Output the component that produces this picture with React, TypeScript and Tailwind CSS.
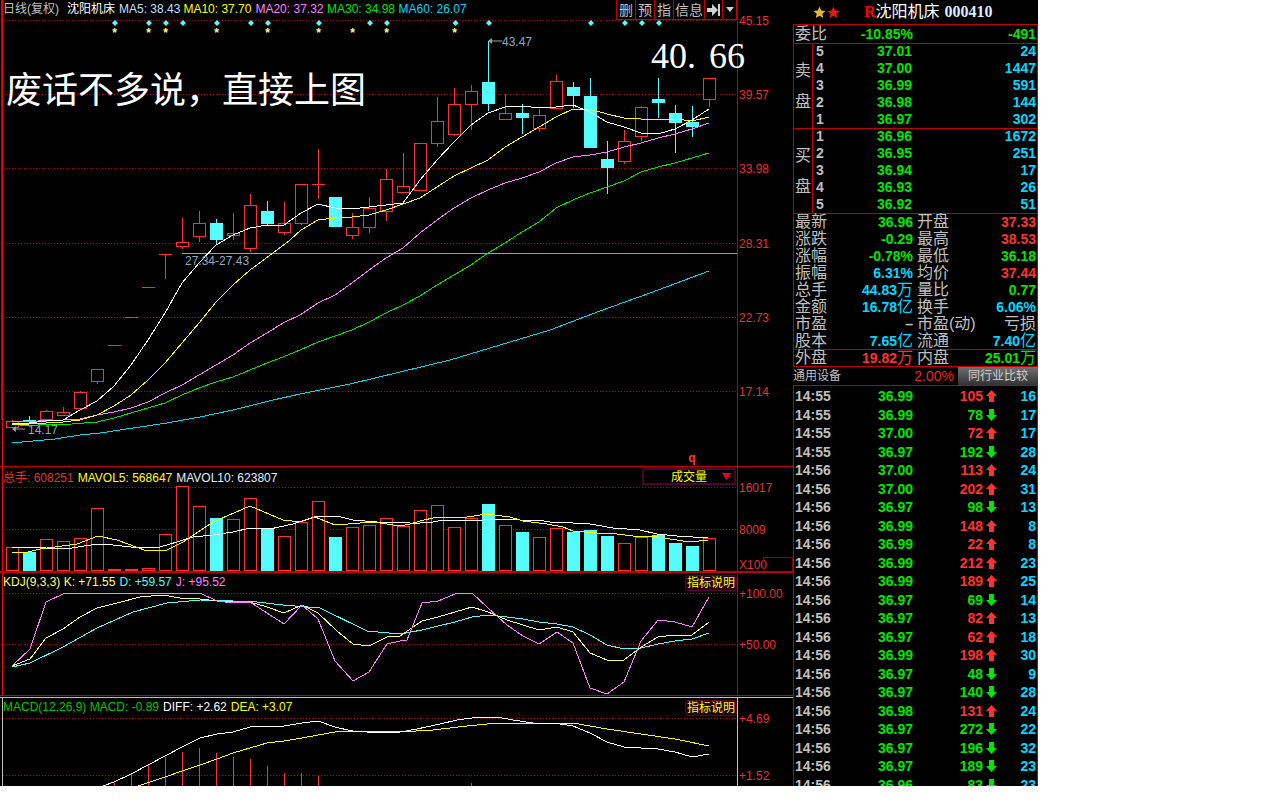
import React from "react";

const RED = "#ff3232";
const CYAN = "#54fcfc";
const FRAME = "#c00000";
const GRID = "#b80000";
const AXIS = "#e63232";
const GREEN = "#00e600";
const NUMCYAN = "#00d8ff";

type C = [number, number, number, number, number]; // wickTop, bodyTop, bodyBottom, wickBottom, isCyan
const candles: C[] = [
  [420, 421, 427, 428, 0], [416, 420, 422, 424, 1], [410, 411, 419, 422, 0], [407, 412, 415, 416, 0],
  [391, 392, 408, 410, 0], [369, 369, 381, 384, 0], [345, 345, 345, 345, 0], [317, 317, 317, 317, 0],
  [287, 287, 287, 287, 0], [254, 254, 254, 279, 0], [218, 242, 246, 249, 0], [211, 223, 236, 242, 0],
  [219, 223, 240, 245, 1], [213, 233, 235, 240, 0], [194, 205, 248, 252, 0], [201, 211, 224, 226, 1],
  [202, 223, 232, 235, 0], [184, 184, 223, 225, 0], [149, 184, 184, 199, 0], [197, 197, 227, 227, 1],
  [213, 227, 235, 239, 0], [197, 208, 227, 233, 0], [169, 179, 211, 221, 0], [153, 186, 192, 193, 0],
  [143, 143, 190, 190, 0], [97, 121, 143, 147, 0], [88, 104, 134, 136, 0], [85, 91, 104, 130, 0],
  [41, 82, 104, 111, 1], [94, 113, 119, 119, 0], [104, 113, 118, 134, 1], [109, 115, 128, 132, 0],
  [75, 81, 108, 109, 0], [82, 87, 96, 108, 1], [78, 96, 148, 148, 1], [141, 159, 168, 194, 1],
  [130, 141, 161, 164, 0], [106, 107, 136, 141, 0], [78, 99, 103, 118, 1], [105, 113, 123, 153, 1],
  [106, 122, 127, 137, 1], [78, 78, 99, 107, 0],
];

const vols: [number, number][] = [
  [547, 0], [552, 1], [539, 0], [541, 0], [538, 0], [508, 0], [569, 0], [569, 0], [568, 0], [534, 0], [486, 0],
  [506, 0], [518, 1], [519, 0], [498, 0], [529, 1], [536, 0], [522, 0], [501, 0], [537, 1], [527, 0], [525, 0],
  [518, 0], [526, 0], [510, 0], [505, 0], [527, 0], [518, 0], [504, 1], [525, 0], [532, 1], [537, 0], [528, 0],
  [532, 1], [530, 1], [536, 1], [543, 0], [537, 0], [535, 1], [543, 1], [546, 1], [538, 0],
];

const ma5 = "12,423 29,423 46,421 63,420 80,410 97,401 114,386 131,365 148,340 165,313 182,283 199,263 216,245 233,235 250,228 267,225 284,225 301,213 318,204 335,208 352,209 369,207 386,205 403,203 420,180 437,160 454,142 471,125 488,113 505,107 522,106 539,108 556,107 573,105 590,112 607,122 624,127 641,133 658,134 675,129 692,120 709,109";
const ma10 = "12,424 29,424 63,422 80,420 97,415 114,406 131,395 148,380 165,363 182,343 199,323 216,302 233,285 250,270 273,253 290,240 301,230 318,220 335,218 352,217 369,215 386,210 403,204 420,198 437,187 454,176 471,168 488,160 505,147 522,137 539,127 556,117 573,109 590,109 607,114 624,118 641,119 658,119 675,119 692,121 709,117";
const ma20 = "12,422 38,421 63,420 80,419 97,415 114,412 131,408 148,402 165,393 182,385 199,375 216,365 233,355 250,343 267,333 283,323 300,315 318,303 335,295 352,283 369,270 386,258 403,248 420,233 437,220 454,208 471,198 488,190 505,183 522,178 539,172 556,163 573,157 590,155 607,152 624,147 641,143 658,138 675,134 692,129 709,123";
const ma30 = "20,425 38,425 72,424 97,422 114,418 131,413 148,408 165,403 182,395 199,388 216,382 233,377 250,370 267,363 283,357 300,350 318,342 335,336 352,330 369,322 386,313 403,305 420,296 437,285 454,275 471,265 488,253 505,243 522,232 539,222 556,208 573,200 590,193 607,187 624,181 641,172 658,167 675,163 692,158 709,153";
const ma60 = "12,443 33,441 55,439 80,435 100,433 133,428 167,423 200,417 233,410 273,400 300,394 350,384 400,372 450,360 500,345 550,330 600,311 650,293 709,271";

const volWhite = "12,547 37,547 55,549 72,548 97,544 113,545 140,548 160,547 177,542 193,537 213,535 233,532 250,528 270,529 293,524 317,516 337,516 353,520 377,522 400,522 410,523 420,523 433,522 443,520 467,520 483,520 500,519 520,520 537,520 550,522 573,523 590,524 613,528 640,530 657,534 677,536 693,537 708,538";
const volYellow = "12,553 28,552 40,549 77,544 98,536 117,540 147,551 167,550 183,542 213,522 250,506 283,520 300,522 315,517 335,525 373,522 400,526 410,524 420,521 437,517 467,517 487,514 510,517 523,521 547,524 563,527 573,531 597,533 617,534 633,536 657,537 670,539 690,542 708,540";

const kdjJ = "12,666 30,649 46,602 63,594 72,593 200,593 217,601 233,603 250,602 267,613 284,624 302,605 318,619 335,661 353,681 369,672 387,644 400,641 407,640 422,603 438,601 455,594 472,593 488,608 507,625 523,636 539,644 557,632 573,643 590,688 607,694 624,682 641,641 658,620 675,622 692,627 709,597";
const kdjK = "12,666 30,659 46,638 63,629 80,617 97,608 117,603 140,597 163,595 180,598 200,599 217,601 233,602 250,602 267,607 284,613 302,605 318,613 337,631 353,644 369,646 387,637 400,636 422,621 438,617 455,612 472,607 488,612 507,620 523,625 539,630 557,627 573,632 590,653 607,660 624,660 641,647 658,637 675,635 692,635 709,622";
const kdjD = "12,667 30,663 63,647 97,628 133,612 167,603 200,600 233,601 257,602 283,605 320,608 367,631 400,634 422,630 438,626 455,622 472,617 488,615 507,617 523,619 539,622 557,624 573,627 590,635 607,645 624,649 641,648 658,644 675,641 692,639 709,633";

const diff = "103,786 114,782 131,774 148,765 165,756 182,747 200,738 217,734 233,732 250,727 267,726 284,726 302,723 318,721 335,727 352,731 367,732 400,732 417,729 440,724 457,720 472,718 497,717 513,720 533,723 560,724 573,726 590,733 607,742 624,747 641,748 658,749 675,752 692,757 709,754";
const dea = "138,786 165,777 182,771 200,765 217,759 233,753 250,748 267,743 284,741 302,738 318,735 335,732 352,731 400,732 433,730 467,726 497,723 533,723 573,723 607,729 641,734 675,739 709,746";
const macdBars: [number, number][] = [[114, 783], [131, 774], [148, 765], [165, 757], [182, 752], [199, 748], [216, 753], [233, 757], [250, 759], [267, 766], [284, 773], [301, 773], [318, 776], [471, 783]];

const diamonds = [115, 149, 166, 183, 217, 251, 268, 319, 370, 387, 455.5, 489, 591, 625, 642, 659];
const stars = [114.5, 148.5, 165.5, 216.5, 267.5, 318.5, 352.5, 386.5, 454.5];

function Line({ pts, color }: { pts: string; color: string }) {
  return <polyline points={pts} fill="none" stroke={color} strokeWidth={1} shapeRendering="crispEdges" />;
}

function Grid({ y, x2 = 737 }: { y: number; x2?: number }) {
  return <line x1={3} x2={x2} y1={y} y2={y} stroke={GRID} strokeWidth={1} strokeDasharray="1 2" shapeRendering="crispEdges" />;
}

function AxisLabel({ y, children }: { y: number; children: React.ReactNode }) {
  return (
    <text x={739} y={y} fill={AXIS} fontSize={12} dominantBaseline="central">
      {children}
    </text>
  );
}

function Rails({ top, bottom, color = FRAME }: { top: number; bottom: number; color?: string }) {
  return (
    <g shapeRendering="crispEdges">
      <line x1={2.5} x2={2.5} y1={top} y2={bottom} stroke={color === FRAME ? "#ff0000" : color} />
      <line x1={737.5} x2={737.5} y1={top} y2={bottom} stroke={color} />
    </g>
  );
}

function MainChart() {
  return (
    <svg className="block h-full w-full" viewBox="0 0 793 466">
      <rect x={1} y={0} width={1} height={420} fill="#c80000" shapeRendering="crispEdges" />
      <Rails top={0} bottom={466} />
      {[20.5, 94.5, 168.5, 243.5, 317.5, 391.5].map((y) => <Grid key={y} y={y} />)}
      <line x1={182} x2={737} y1={253.5} y2={253.5} stroke="#a0a0a0" />
      {diamonds.map((x) => (
        <polygon key={x} points={`${x},20 ${x + 3},23 ${x},26 ${x - 3},23`} fill={CYAN} />
      ))}
      {stars.map((x) => (
        <text key={x} x={x} y={37} fill="#ffff80" fontSize={12} fontWeight={700} textAnchor="middle">*</text>
      ))}
      {candles.map((c, i) => {
        const cx = 12.5 + 17 * i;
        const [wt, bt, bb, wb, cyan] = c;
        const color = cyan ? CYAN : RED;
        return (
          <g key={i} shapeRendering="crispEdges">
            <line x1={cx} x2={cx} y1={wt} y2={wb} stroke={color} />
            {cyan ? (
              <rect x={cx - 6.5} y={bt} width={13} height={bb - bt} fill={CYAN} />
            ) : bb === bt ? (
              <line x1={cx - 6.5} x2={cx + 6.5} y1={bt + 0.5} y2={bt + 0.5} stroke={RED} />
            ) : (
              <rect x={cx - 6} y={bt + 0.5} width={12} height={bb - bt} fill="#000" stroke={RED} />
            )}
          </g>
        );
      })}
      <Line pts={ma60} color="#00d8f0" />
      <Line pts={ma30} color="#00e600" />
      <Line pts={ma20} color="#ff80ff" />
      <Line pts={ma10} color="#ffff00" />
      <Line pts={ma5} color="#ffffff" />
      <polyline points="490,41 502,41" stroke="#a0a0a0" fill="none" />
      <polygon points="488,41 492,38 492,44" fill="#a0a0a0" />
      <text x={502} y={46} fill="#8fa8c0" fontSize={12}>43.47</text>
      <polyline points="14,429 25,429" stroke="#a0a0a0" fill="none" />
      <polygon points="12,429 16,426 16,432" fill="#a0a0a0" />
      <text x={28} y={434} fill="#8fa8c0" fontSize={12}>14.17</text>
      <text x={185} y={265} fill="#8fa8c0" fontSize={12}>27.34-27.43</text>
      <text x={692} y={462} fill={RED} fontSize={12} fontWeight={700} textAnchor="middle">q</text>
      <AxisLabel y={21}>45.15</AxisLabel>
      <AxisLabel y={94.5}>39.57</AxisLabel>
      <AxisLabel y={168.5}>33.98</AxisLabel>
      <AxisLabel y={243.5}>28.31</AxisLabel>
      <AxisLabel y={317.5}>22.73</AxisLabel>
      <AxisLabel y={391.5}>17.14</AxisLabel>
    </svg>
  );
}

function VolumeChart() {
  return (
    <svg className="block h-full w-full" viewBox="0 467 793 104">
      <Rails top={467} bottom={571} />
      <Grid y={487.5} />
      <Grid y={529.5} />
      {vols.map(([top, cyan], i) => {
        const cx = 12.5 + 17 * i;
        return cyan ? (
          <rect key={i} x={cx - 6.5} y={top} width={13} height={571 - top} fill={CYAN} shapeRendering="crispEdges" />
        ) : (
          <rect key={i} x={cx - 6} y={top + 0.5} width={12} height={570 - top} fill="#000" stroke={RED} shapeRendering="crispEdges" />
        );
      })}
      <Line pts={volWhite} color="#ffffff" />
      <Line pts={volYellow} color="#ffff00" />
      <AxisLabel y={488}>16017</AxisLabel>
      <AxisLabel y={530}>8009</AxisLabel>
      <AxisLabel y={565}>X100</AxisLabel>
      <rect x={763.5} y={557.5} width={29} height={14} fill="none" stroke="#900000" shapeRendering="crispEdges" />
    </svg>
  );
}

function KdjChart() {
  return (
    <svg className="block h-full w-full" viewBox="0 573 793 122">
      <Rails top={573} bottom={695} />
      <Grid y={593.5} />
      <Grid y={644.5} />
      <Line pts={kdjD} color={CYAN} />
      <Line pts={kdjK} color="#ffff80" />
      <Line pts={kdjJ} color="#ff80ff" />
      <AxisLabel y={594}>+100.00</AxisLabel>
      <AxisLabel y={645}>+50.00</AxisLabel>
    </svg>
  );
}

function MacdChart() {
  return (
    <svg className="block h-full w-full" viewBox="0 698 793 88">
      <Rails top={698} bottom={786} color="#c0c0c0" />
      <Grid y={718.5} />
      <Grid y={775.5} />
      {macdBars.map(([x, top]) => (
        <line key={x} x1={x + 0.5} x2={x + 0.5} y1={top} y2={786} stroke={RED} shapeRendering="crispEdges" />
      ))}
      <Line pts={dea} color="#ffff00" />
      <Line pts={diff} color="#ffffff" />
      <AxisLabel y={719}>+4.69</AxisLabel>
      <AxisLabel y={776}>+1.52</AxisLabel>
    </svg>
  );
}

function IndicatorTag() {
  return (
    <div className="absolute left-[685px] top-[2px] flex h-[16px] w-[52px] items-center justify-center rounded-[3px] border border-[#5a0030] bg-[#200010] text-[12px] leading-none text-[#ffff00]">
      指标说明
    </div>
  );
}

const toolbar: [string, number][] = [["删", 19], ["预", 19], ["指", 19], ["信息", 31]];

function Toolbar() {
  return (
    <div className="absolute left-[616px] top-0 flex h-[20px] border-b border-[#c00000] text-[14px] leading-none text-[#c0c0c0]">
      {toolbar.map(([t, w]) => (
        <div key={t} style={{ width: w }} className="flex items-center justify-center border-l border-[#c00000]">{t}</div>
      ))}
      <div className="flex w-[18px] items-center justify-center border-l border-[#c00000] bg-[#000]">
        <svg width="14" height="12" viewBox="0 0 14 12">
          <path d="M0 4h5V0l6 6-6 6V8H0z" fill="#d0d0d0" />
          <rect x="11" y="0" width="2" height="12" fill="#d0d0d0" />
        </svg>
      </div>
      <div className="flex w-[15px] items-center justify-center border-x border-[#c00000]">
        <svg width="8" height="5" viewBox="0 0 8 5"><path d="M0 0h8L4 5z" fill="#d0d0d0" /></svg>
      </div>
    </div>
  );
}

function Chinese({ children, className = "" }: { children: React.ReactNode; className?: string }) {
  return <span className={`text-[16px] font-normal leading-none text-[#c0c0c0] ${className}`}>{children}</span>;
}

function Num({ color, children }: { color: string; children: React.ReactNode }) {
  return <span style={{ color }} className="text-[14px] font-bold leading-none">{children}</span>;
}

const sell: [string, string, string][] = [["5", "37.01", "24"], ["4", "37.00", "1447"], ["3", "36.99", "591"], ["2", "36.98", "144"], ["1", "36.97", "302"]];
const buy: [string, string, string][] = [["1", "36.96", "1672"], ["2", "36.95", "251"], ["3", "36.94", "17"], ["4", "36.93", "26"], ["5", "36.92", "51"]];

function Book({ label, rows }: { label: string; rows: [string, string, string][] }) {
  return (
    <div className="flex h-[85px] border-t border-[#c00000]">
      <div className="flex w-[19px] flex-col items-center justify-center gap-[15px] border-r border-[#c00000]">
        <Chinese>{label}</Chinese>
        <Chinese>盘</Chinese>
      </div>
      <div className="-mt-[2px] flex flex-1 flex-col">
        {rows.map(([n, p, v]) => (
          <div key={n} className="flex h-[17px] shrink-0 items-center">
            <span className="w-[20px] pl-[3px]"><Num color="#c0c0c0">{n}</Num></span>
            <span className="w-[79px] text-right"><Num color={GREEN}>{p}</Num></span>
            <span className="flex-1 pr-[1px] text-right"><Num color={NUMCYAN}>{v}</Num></span>
          </div>
        ))}
      </div>
    </div>
  );
}

type Stat = [string, string, string, string, string, string, string?, string?];
const stats: Stat[] = [
  ["最新", "36.96", GREEN, "开盘", "37.33", RED],
  ["涨跌", "-0.29", GREEN, "最高", "38.53", RED],
  ["涨幅", "-0.78%", GREEN, "最低", "36.18", GREEN],
  ["振幅", "6.31%", NUMCYAN, "均价", "37.44", RED],
  ["总手", "44.83", NUMCYAN, "量比", "0.77", GREEN, "万"],
  ["金额", "16.78", NUMCYAN, "换手", "6.06%", NUMCYAN, "亿"],
  ["市盈", "–", "#c0c0c0", "市盈(动)", "亏损", "#c0c0c0"],
  ["股本", "7.65", NUMCYAN, "流通", "7.40", NUMCYAN, "亿", "亿"],
];

function Unit({ color, children }: { color: string; children: React.ReactNode }) {
  return <span style={{ color }} className="text-[16px] leading-none">{children}</span>;
}

function StatRow({ s }: { s: Stat }) {
  const [l1, v1, c1, l2, v2, c2, u1, u2] = s;
  return (
    <div className="flex h-[17px] shrink-0 items-center">
      <span className="w-[1px]" />
      <Chinese className="w-[40px] whitespace-nowrap">{l1}</Chinese>
      <span className="w-[78px] whitespace-nowrap text-right">
        <Num color={c1}>{v1}</Num>{u1 && <Unit color={c1}>{u1}</Unit>}
      </span>
      <Chinese className="ml-[4px] w-[40px] whitespace-nowrap">{l2}</Chinese>
      <span className="flex-1 whitespace-nowrap pr-[1px] text-right">
        {v2 === "亏损" ? <Chinese>{v2}</Chinese> : <Num color={c2}>{v2}</Num>}
        {u2 && <Unit color={c2}>{u2}</Unit>}
      </span>
    </div>
  );
}

type Trade = [string, string, string, 0 | 1, string];
const trades: Trade[] = [
  ["14:55", "36.99", "105", 1, "16"], ["14:55", "36.99", "78", 0, "17"], ["14:55", "37.00", "72", 1, "17"],
  ["14:55", "36.97", "192", 0, "28"], ["14:56", "37.00", "113", 1, "24"], ["14:56", "37.00", "202", 1, "31"],
  ["14:56", "36.97", "98", 0, "13"], ["14:56", "36.99", "148", 1, "8"], ["14:56", "36.99", "22", 1, "8"],
  ["14:56", "36.99", "212", 1, "23"], ["14:56", "36.99", "189", 1, "25"], ["14:56", "36.97", "69", 0, "14"],
  ["14:56", "36.97", "82", 1, "13"], ["14:56", "36.97", "62", 1, "18"], ["14:56", "36.99", "198", 1, "30"],
  ["14:56", "36.97", "48", 0, "9"], ["14:56", "36.97", "140", 0, "28"], ["14:56", "36.98", "131", 1, "24"],
  ["14:56", "36.97", "272", 0, "22"], ["14:56", "36.97", "196", 0, "32"], ["14:56", "36.97", "189", 0, "23"],
  ["14:56", "36.96", "83", 0, "23"],
];

function Arrow({ up }: { up: boolean }) {
  return (
    <svg width="11" height="12" viewBox="0 0 11 12" className="ml-[3px] mr-[3px] shrink-0">
      {up ? <path d="M5.5 0L11 6H8v6H3V6H0z" fill={RED} /> : <path d="M5.5 12L0 6h3V0h5v6h3z" fill={GREEN} />}
    </svg>
  );
}

function Star({ fill }: { fill: string }) {
  return (
    <svg width="13" height="13" viewBox="0 0 24 24">
      <path d="M12 1l3.2 7.2 7.8.8-5.8 5.2 1.7 7.8L12 18l-6.9 4 1.7-7.8L1 9l7.8-.8z" fill={fill} />
    </svg>
  );
}

function RightPanel() {
  return (
    <div className="flex w-[245px] shrink-0 flex-col">
      <div className="relative flex h-[24px] items-center pl-[20px]">
        <Star fill="#f0b038" />
        <span className="ml-[1px] flex"><Star fill="#e81818" /></span>
        <div className="ml-[24px] flex items-center">
          <span className="text-[16px] font-bold leading-none text-[#ff0000] [font-family:'Liberation_Serif',serif]">R</span>
          <span className="text-[16px] leading-none text-white">沈阳机床</span>
          <span className="ml-[5px] text-[16px] font-bold leading-none text-[#d8ecff] [font-family:'Liberation_Serif',serif]">000410</span>
        </div>
      </div>
      <div className="flex flex-col border-x border-[#c00000]">
        <div className="flex h-[19px] items-center border-t border-[#c00000] pl-[1px]">
          <Chinese className="w-[40px]">委比</Chinese>
          <span className="w-[78px] text-right"><Num color={GREEN}>-10.85%</Num></span>
          <span className="flex-1 pr-[1px] text-right"><Num color={GREEN}>-491</Num></span>
        </div>
        <Book label="卖" rows={sell} />
        <Book label="买" rows={buy} />
        <div className="flex h-[136px] flex-col border-t border-[#c00000]">
          <div className="-mt-[1px] flex flex-col">
            {stats.map((s) => <StatRow key={s[0]} s={s} />)}
          </div>
        </div>
        <div className="flex h-[17px] items-center border-t border-[#c00000]">
          <span className="w-[1px]" />
          <Chinese className="w-[40px]">外盘</Chinese>
          <span className="w-[78px] text-right"><Num color={RED}>19.82</Num><Unit color={RED}>万</Unit></span>
          <Chinese className="ml-[4px] w-[40px]">内盘</Chinese>
          <span className="flex-1 pr-[1px] text-right"><Num color={GREEN}>25.01</Num><Unit color={GREEN}>万</Unit></span>
        </div>
      </div>
      <div className="flex h-[19px] items-center border-t border-[#c00000]">
        <span className="text-[12px] leading-none text-[#c0c0c0]">通用设备</span>
        <span className="ml-[auto] text-[14px] leading-none text-[#e62828]">2.00%</span>
        <div className="ml-[4px] flex h-[19px] w-[80px] items-center justify-center bg-gradient-to-b from-[#707070] to-[#303030] text-[12px] leading-none text-[#d0d0d0]">同行业比较</div>
      </div>
      <div className="min-h-0 flex-1 overflow-hidden border-x border-t border-[#c00000] pt-[1px]">
        {trades.map((t, i) => (
          <div key={i} className="flex h-[18.5px] items-center pl-[1px]">
            <span className="w-[50px]"><Num color="#c0c0c0">{t[0]}</Num></span>
            <span className="w-[68px] text-right"><Num color={GREEN}>{t[1]}</Num></span>
            <span className="w-[70px] text-right"><Num color={t[3] ? RED : GREEN}>{t[2]}</Num></span>
            <Arrow up={t[3] === 1} />
            <span className="flex-1 pr-[1px] text-right"><Num color={NUMCYAN}>{t[4]}</Num></span>
          </div>
        ))}
      </div>
    </div>
  );
}

export default function App() {
  return (
    <div className="flex h-[786px] w-[1038px] overflow-hidden bg-black [font-family:'Liberation_Sans','Noto_Sans_CJK_SC',sans-serif]">
      <div className="flex w-[793px] shrink-0 flex-col">
        <div className="relative h-[467px] shrink-0 border-b border-[#c00000]">
          <MainChart />
          <div className="absolute left-[2px] top-[-1px] flex h-[20px] items-center whitespace-nowrap text-[12px] leading-none">
            <span className="ml-[1px] text-[#c0c0c0]">日线(复权)</span>
            <span className="ml-[8px] text-white">沈阳机床</span>
            <span className="ml-[4px] text-[#c0e0ff]">MA5: 38.43</span>
            <span className="ml-[3px] text-[#ffff00]">MA10: 37.70</span>
            <span className="ml-[4px] text-[#ff80ff]">MA20: 37.32</span>
            <span className="ml-[3.5px] text-[#00e600]">MA30: 34.98</span>
            <span className="ml-[3.5px] text-[#00d8f0]">MA60: 26.07</span>
          </div>
          <Toolbar />
          <div className="absolute left-[6px] top-[73px] whitespace-nowrap text-[36px] leading-none text-white [font-family:'Liberation_Serif','Noto_Sans_CJK_SC',serif]">废话不多说，直接上图</div>
          <div className="absolute left-[651px] top-[38px] whitespace-nowrap text-[36px] leading-none text-white [font-family:'Liberation_Serif',serif]">40.<span className="ml-[13px]">66</span></div>
        </div>
        <div className="relative h-[106px] shrink-0 border-b-2 border-[#c00000]">
          <VolumeChart />
          <div className="absolute left-[3px] top-[4px] flex h-[14px] items-center whitespace-nowrap text-[12px] leading-none">
            <span className="text-[#e63232]">总手: 608251</span>
            <span className="ml-[4px] text-[#ffff00]">MAVOL5: 568647</span>
            <span className="ml-[4px] text-[#e0f0ff]">MAVOL10: 623807</span>
          </div>
          <div className="absolute left-[642px] top-[1px] flex h-[17px] w-[94px] items-center justify-center rounded-[3px] border-2 border-[#500030] text-[12px] leading-none text-[#ffff00]">
            成交量
            <svg width="9" height="7" viewBox="0 0 9 7" className="absolute right-[3px]"><path d="M0 0h9L4.5 7z" fill="#e80030" /></svg>
          </div>
        </div>
        <div className="relative h-[123px] shrink-0 border-b border-[#c00000]">
          <KdjChart />
          <div className="absolute left-[3px] top-[2px] flex h-[14px] items-center whitespace-nowrap text-[12px] leading-none">
            <span className="text-[#ffff80]">KDJ(9,3,3) K: +71.55</span>
            <span className="ml-[4px] text-[#54fcfc]">D: +59.57</span>
            <span className="ml-[4px] text-[#ff80ff]">J: +95.52</span>
          </div>
          <IndicatorTag />
        </div>
        <div className="relative mt-[1px] min-h-0 flex-1 border-t border-[#c0c0c0]">
          <MacdChart />
          <div className="absolute left-[3px] top-[2px] flex h-[14px] items-center whitespace-nowrap text-[12px] leading-none">
            <span className="text-[#00c800]">MACD(12,26,9) MACD: -0.89</span>
            <span className="ml-[4px] text-white">DIFF: +2.62</span>
            <span className="ml-[4px] text-[#ffff00]">DEA: +3.07</span>
          </div>
          <IndicatorTag />
        </div>
      </div>
      <RightPanel />
    </div>
  );
}
